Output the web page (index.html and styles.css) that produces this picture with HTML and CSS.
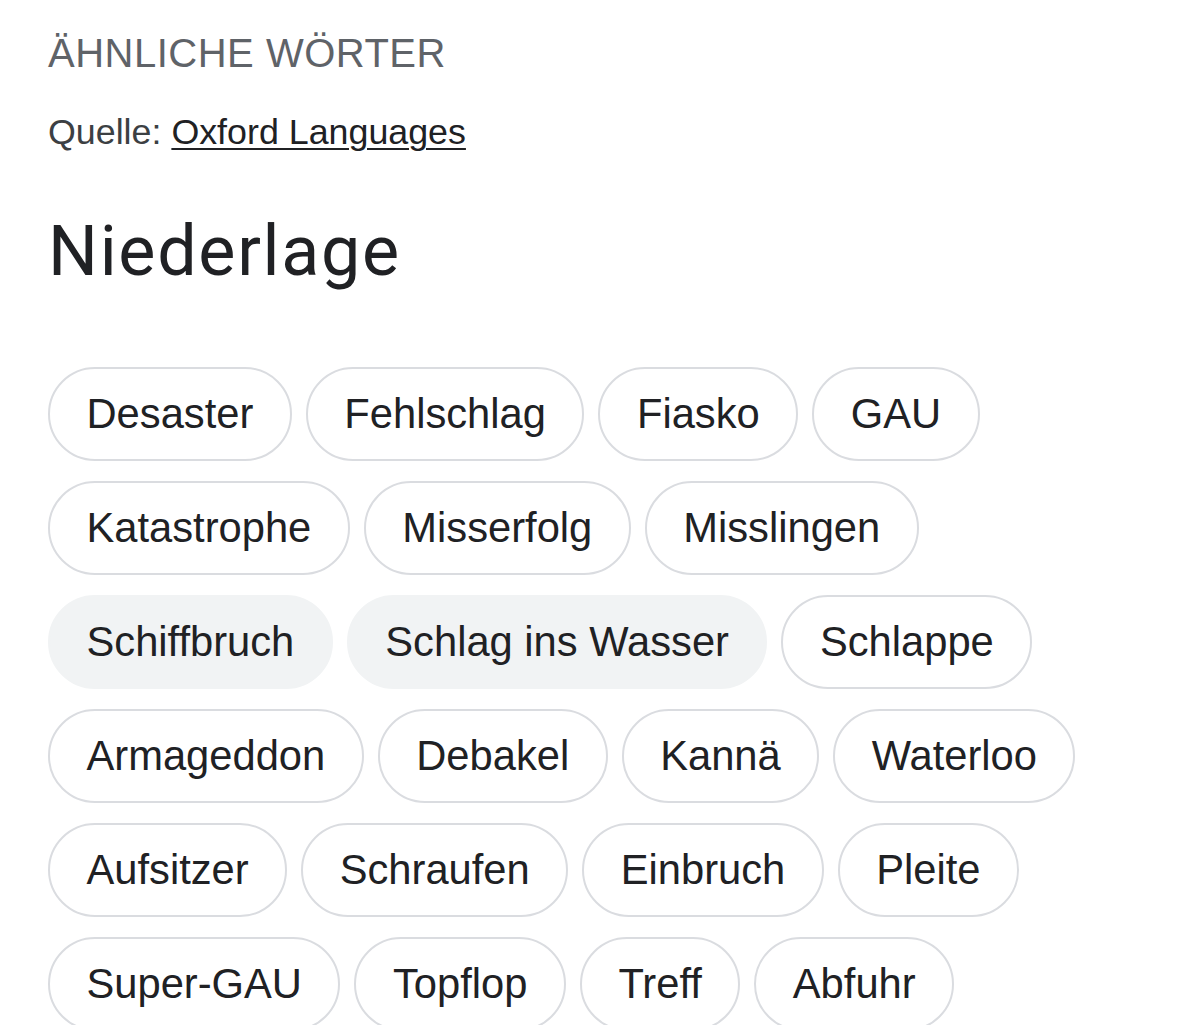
FILE: index.html
```html
<!DOCTYPE html>
<html lang="de">
<head>
<meta charset="utf-8">
<title>Ähnliche Wörter</title>
<link rel="stylesheet" href="styles.css">
</head>
<body>
<main class="page">
  <div class="section-title">ÄHNLICHE WÖRTER</div>
  <div class="source">Quelle: <a class="source-link" href="#">Oxford Languages</a></div>
  <h1 class="headword">Niederlage</h1>
  <div class="chips">
    <span class="chip">Desaster</span>
    <span class="chip">Fehlschlag</span>
    <span class="chip">Fiasko</span>
    <span class="chip">GAU</span>
    <span class="chip">Katastrophe</span>
    <span class="chip">Misserfolg</span>
    <span class="chip">Misslingen</span>
    <span class="chip chip-filled">Schiffbruch</span>
    <span class="chip chip-filled">Schlag ins Wasser</span>
    <span class="chip">Schlappe</span>
    <span class="chip">Armageddon</span>
    <span class="chip">Debakel</span>
    <span class="chip">Kannä</span>
    <span class="chip">Waterloo</span>
    <span class="chip">Aufsitzer</span>
    <span class="chip">Schraufen</span>
    <span class="chip">Einbruch</span>
    <span class="chip">Pleite</span>
    <span class="chip">Super-GAU</span>
    <span class="chip">Topflop</span>
    <span class="chip">Treff</span>
    <span class="chip">Abfuhr</span>
  </div>
</main>
</body>
</html>
```

FILE: styles.css
```css
html, body {
  margin: 0;
  padding: 0;
  background: #ffffff;
}

body {
  font-family: "Liberation Sans", Arial, sans-serif;
  color: #202124;
  overflow: hidden;
}

.page {
  padding: 29px 48px 0 48px;
}

.section-title {
  font-size: 40px;
  line-height: 48px;
  color: #5f6368;
  letter-spacing: 0.5px;
}

.source {
  margin-top: 33px;
  font-size: 35.8px;
  line-height: 44px;
  color: #3c4043;
}

.source-link {
  color: #202124;
  text-decoration: underline;
  text-decoration-thickness: 2px;
  text-underline-offset: 4px;
}

.headword {
  margin: 55px 0 0 0;
  font-family: Roboto, "Open Sans", sans-serif;
  font-weight: 400;
  font-size: 70px;
  line-height: 84px;
  letter-spacing: 1.7px;
  color: #202124;
}

.chips {
  margin-top: 74px;
  display: flex;
  flex-wrap: wrap;
  gap: 20px 14px;
}

.chip {
  display: inline-block;
  font-size: 41.7px;
  line-height: 48px;
  padding: 21px 36.5px;
  border: 2px solid #dadce0;
  border-radius: 48px;
  color: #202124;
  white-space: nowrap;
}

.chip-filled {
  background: #f1f3f4;
  border-color: #f1f3f4;
}
```
